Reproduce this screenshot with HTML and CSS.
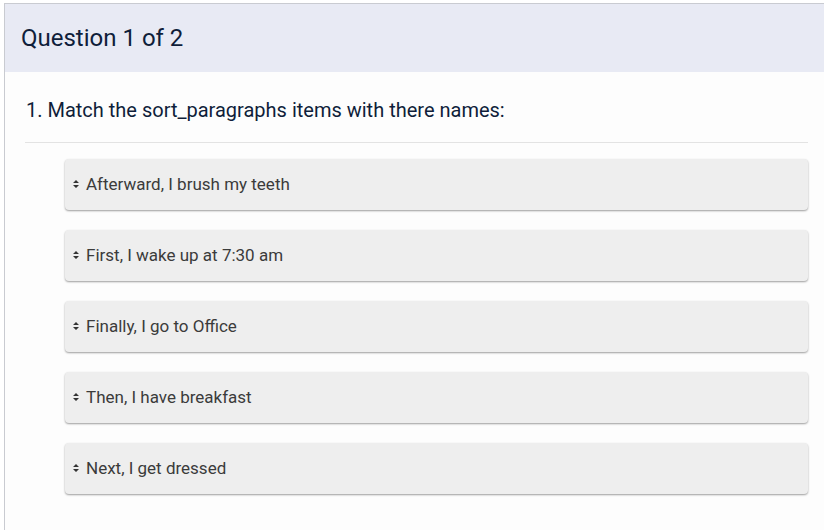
FILE: index.html
```html
<!DOCTYPE html>
<html>
<head>
<meta charset="utf-8">
<link rel="stylesheet" href="styles.css">
</head>
<body>
<div class="card">
  <div class="card-header">Question 1 of 2</div>
  <div class="card-body">
    <div class="question">1. Match the sort_paragraphs items with there names:</div>
    <ul class="sort-list">
      <li class="sort-item"><svg class="handle" width="6" height="8" viewBox="0 0 6 8"><path d="M3 0 L6 3 L0 3 Z M0 5 L6 5 L3 8 Z" fill="#333"/></svg><span>Afterward, I brush my teeth</span></li>
      <li class="sort-item"><svg class="handle" width="6" height="8" viewBox="0 0 6 8"><path d="M3 0 L6 3 L0 3 Z M0 5 L6 5 L3 8 Z" fill="#333"/></svg><span>First, I wake up at 7:30 am</span></li>
      <li class="sort-item"><svg class="handle" width="6" height="8" viewBox="0 0 6 8"><path d="M3 0 L6 3 L0 3 Z M0 5 L6 5 L3 8 Z" fill="#333"/></svg><span>Finally, I go to Office</span></li>
      <li class="sort-item"><svg class="handle" width="6" height="8" viewBox="0 0 6 8"><path d="M3 0 L6 3 L0 3 Z M0 5 L6 5 L3 8 Z" fill="#333"/></svg><span>Then, I have breakfast</span></li>
      <li class="sort-item"><svg class="handle" width="6" height="8" viewBox="0 0 6 8"><path d="M3 0 L6 3 L0 3 Z M0 5 L6 5 L3 8 Z" fill="#333"/></svg><span>Next, I get dressed</span></li>
    </ul>
  </div>
</div>
</body>
</html>
```
FILE: styles.css
```css
html, body {
  margin: 0;
  padding: 0;
  background: #ffffff;
  overflow: hidden;
  height: 530px;
  font-family: Roboto, "Liberation Sans", sans-serif;
}
.card {
  margin: 3px 0 0 4px;
  width: 840px;
  height: 527px;
  box-sizing: border-box;
  border-top: 1px solid #c9cbd1;
  border-left: 1px solid #c9cbd1;
  background: #fdfdfd;
}
.card-header {
  background: #e8eaf4;
  height: 68px;
  display: flex;
  align-items: center;
  padding-left: 16px;
  font-size: 24px;
  color: #0f1e3a;
}
.card-body {
  padding: 0 0 0 20px;
  width: 783px;
}
.question {
  font-size: 20px;
  color: #0f1e3a;
  height: 71px;
  padding-top: 6px;
  box-sizing: border-box;
  display: flex;
  align-items: center;
  padding-left: 1px;
  border-bottom: 1px solid #e3e3e3;
}
.sort-list {
  list-style: none;
  margin: 16px 0 0 0;
  padding: 0 0 0 40px;
  display: flex;
  flex-direction: column;
  gap: 20px;
}
.sort-item {
  height: 51px;
  box-sizing: border-box;
  padding-bottom: 2px;
  background: #eeeeee;
  border-radius: 4px;
  box-shadow: 0 1px 2px #9d9d9d;
  display: flex;
  align-items: center;
  padding-left: 8px;
  font-size: 17px;
  color: #3b3b3b;
}
.handle {
  margin-right: 7px;
  flex: none;
}
```
